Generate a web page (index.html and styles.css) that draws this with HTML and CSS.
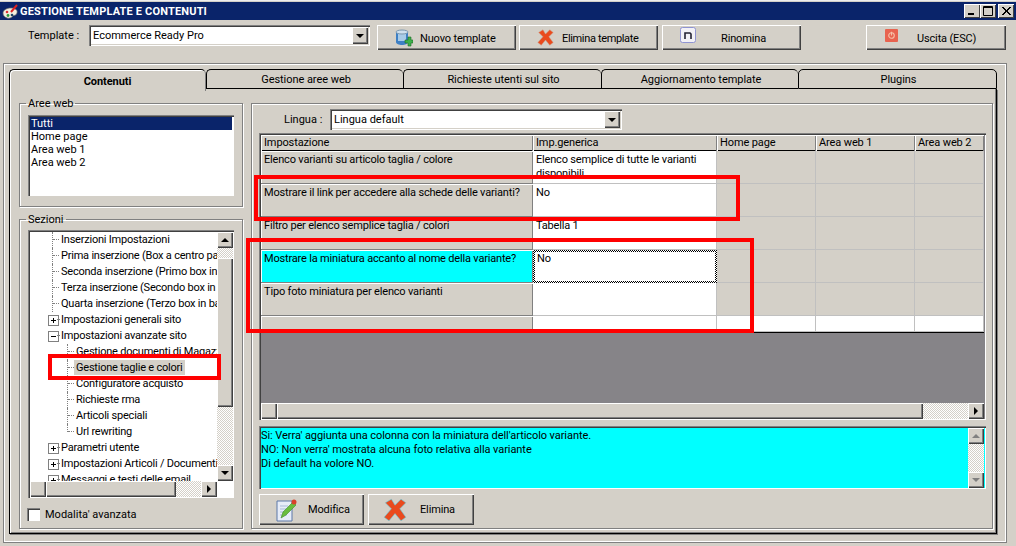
FILE: index.html
```html
<!DOCTYPE html>
<html lang="it">
<head>
<meta charset="utf-8">
<title>Gestione template e contenuti</title>
<link rel="stylesheet" href="styles.css">
</head>
<body>
<div class="window">
  <header class="titlebar">
    <svg class="appicon" width="17" height="15" viewBox="0 0 17 15"><path d="M1 9c0-3 4-5 8-5s7 2 6 5-3 2-4 3-3 3-6 2-4-3-4-5z" fill="#f2eee0" stroke="#666" stroke-width=".7"/><circle cx="5" cy="8" r="1.300" fill="#d33"/><circle cx="6" cy="11.500" r="1.400" fill="#2a9a3a"/><circle cx="10" cy="11" r="1.300" fill="#246"/><path d="M9 8 15 1" stroke="#d22" stroke-width="2"/></svg>
    <span class="titletext">GESTIONE TEMPLATE E CONTENUTI</span>
    <span class="caption-btns">
      <span class="capbtn"><svg width="14" height="12"><rect x="3" y="8" width="6" height="2" fill="#000"/></svg></span>
      <span class="capbtn"><svg width="14" height="12"><path d="M2.500 1.500h9v9h-9z M2 2.500h10" fill="none" stroke="#000"/></svg></span>
      <span class="capbtn close"><svg width="14" height="12"><path d="M3 2l8 8M4 2l8 8M11 2l-8 8M12 2l-8 8" stroke="#000" fill="none"/></svg></span>
    </span>
  </header>

  <div class="toolbar">
    <label class="tb-label">Template :</label>
    <div class="combo combo-template"><span class="combo-text">Ecommerce Ready Pro</span><span class="sb-btn combo-arrow"><i class="arr down"></i></span></div>
    <button class="btn btn-top b-new"><svg width="18" height="18" viewBox="0 0 18 18"><path d="M1 3v10c0 2 3 3 6 3s6-1 6-3V3z" fill="#3d7fc4"/><path d="M3 5h8v7H3z" fill="#a8cbe8"/><ellipse cx="7" cy="3" rx="6" ry="2" fill="#cfe0ef" stroke="#7c98b0"/><path d="M10 11h3V8h3v3h2v3h-2v3h-3v-3h-3z" fill="#3cb04a" stroke="#1d6a27" stroke-width=".6"/></svg><span>Nuovo template</span></button>
    <button class="btn btn-top b-del"><svg width="17" height="17" viewBox="0 0 20 20"><path d="M2 4 7 1l3 5 5-5 4 3-5 5 5 7-4 3-5-6-5 6-4-3 6-7z" fill="#ea4a1d" stroke="#c9a08a" stroke-width=".6"/></svg><span>Elimina template</span></button>
    <button class="btn btn-top b-ren"><svg class="ic-up" width="16" height="16" viewBox="0 0 16 16"><rect x=".5" y=".5" width="15" height="15" rx="2" fill="#f2f1f6" stroke="#8f94d2"/><path d="M5 12V6h5l1 1v5" fill="none" stroke="#223" stroke-width="1.600"/></svg><span>Rinomina</span></button>
    <button class="btn btn-top b-exit"><svg class="ic-up" width="13" height="13" viewBox="0 0 14 14"><rect width="14" height="14" rx="1" fill="#e8634f"/><circle cx="7" cy="7" r="3" fill="none" stroke="#f6c0a8" stroke-width="1.200"/><rect x="6.400" y="3" width="1.200" height="4" fill="#f6c0a8"/></svg><span>Uscita (ESC)</span></button>
  </div>

  <div class="pageframe">
    <nav class="tabs">
      <div class="tab active">Contenuti</div>
      <div class="tab">Gestione aree web</div>
      <div class="tab t3">Richieste utenti sul sito</div>
      <div class="tab">Aggiornamento template</div>
      <div class="tab">Plugins</div>
    </nav>
    <div class="tabbody">
      <aside class="left">
        <fieldset class="group g-aree">
          <legend>Aree web</legend>
          <ul class="listbox">
            <li class="sel">Tutti</li>
            <li>Home page</li>
            <li>Area web 1</li>
            <li>Area web 2</li>
          </ul>
        </fieldset>
        <fieldset class="group g-sez">
          <legend>Sezioni</legend>
          <div class="tree">
            <div class="tree-main">
              <div class="tree-rows">
                <div class="row l1 cont">Inserzioni Impostazioni</div>
                <div class="row l1 cont">Prima inserzione (Box a centro pagina)</div>
                <div class="row l1 cont">Seconda inserzione (Primo box in basso)</div>
                <div class="row l1 cont">Terza inserzione (Secondo box in basso)</div>
                <div class="row l1 cont">Quarta inserzione (Terzo box in basso)</div>
                <div class="row l0 plus">Impostazioni generali sito</div>
                <div class="row l0 minus">Impostazioni avanzate sito</div>
                <div class="row l2 cont">Gestione documenti di Magazzino</div>
                <div class="row l2 cont"><span class="treesel">Gestione taglie e colori</span></div>
                <div class="row l2 cont">Configuratore acquisto</div>
                <div class="row l2 cont">Richieste rma</div>
                <div class="row l2 cont">Articoli speciali</div>
                <div class="row l2 last">Url rewriting</div>
                <div class="row l0 plus">Parametri utente</div>
                <div class="row l0 plus">Impostazioni Articoli / Documenti</div>
                <div class="row l0 plus">Messaggi e testi delle email</div>
              </div>
              <div class="vbar tree-vbar">
                <span class="sb-btn"><i class="arr up"></i></span>
                <span class="track t1"></span>
                <span class="thumb th-tree"></span>
                <span class="track t2"></span>
                <span class="sb-btn"><i class="arr down"></i></span>
              </div>
            </div>
            <div class="hbar tree-hbar">
              <span class="sb-btn"><i class="arr left"></i></span>
              <span class="thumb th-treeh"></span>
              <span class="track grow"></span>
              <span class="sb-btn"><i class="arr right"></i></span>
            </div>
          </div>
          <label class="check"><span class="checkbox"></span>Modalita' avanzata</label>
        </fieldset>
      </aside>

      <section class="panel">
        <div class="lang">
          <label class="lang-label">Lingua :</label>
          <div class="combo combo-lang"><span class="combo-text">Lingua default</span><span class="sb-btn combo-arrow"><i class="arr down"></i></span></div>
        </div>
        <div class="gridbox">
          <div class="grid">
            <div class="hd">Impostazione</div><div class="hd">Imp.generica</div><div class="hd">Home page</div><div class="hd">Area web 1</div><div class="hd">Area web 2</div>
            <div class="c name">Elenco varianti su articolo taglia / colore</div><div class="c val">Elenco semplice di tutte le varianti disponibili</div><div class="c na"></div><div class="c na"></div><div class="c na"></div>
            <div class="c name">Mostrare il link per accedere alla schede delle varianti?</div><div class="c val">No</div><div class="c na"></div><div class="c na"></div><div class="c na"></div>
            <div class="c name">Filtro per elenco semplice taglia / colori</div><div class="c val">Tabella 1</div><div class="c na"></div><div class="c na"></div><div class="c na"></div>
            <div class="c name hot">Mostrare la miniatura accanto al nome della variante?</div><div class="c val focus">No</div><div class="c na"></div><div class="c na"></div><div class="c na"></div>
            <div class="c name">Tipo foto miniatura per elenco varianti</div><div class="c val"></div><div class="c na"></div><div class="c na"></div><div class="c na"></div>
            <div class="c name endrow"></div><div class="c val endrow"></div><div class="c val endrow"></div><div class="c val endrow"></div><div class="c val endrow"></div>
          </div>
          <div class="grid-empty"></div>
          <div class="hbar grid-hbar">
            <span class="sb-btn"><i class="arr left"></i></span>
            <span class="thumb grow"></span>
            <span class="track gtrack"></span>
            <span class="sb-btn"><i class="arr right"></i></span>
          </div>
        </div>
        <div class="memo">
          <div class="memo-text">Si: Verra' aggiunta una colonna con la miniatura dell'articolo variante.<br>NO: Non verra' mostrata alcuna foto relativa alla variante<br>Di default ha volore NO.</div>
          <div class="vbar memo-vbar">
            <span class="sb-btn"><i class="arr up dis"></i></span>
            <span class="track grow"></span>
            <span class="sb-btn"><i class="arr down dis"></i></span>
          </div>
        </div>
        <div class="actions">
          <button class="btn btn-act b-mod"><svg width="22" height="24" viewBox="0 0 22 24"><path d="M1 3h15v20H1z" fill="#e6ecf8" stroke="#5d78a8"/><path d="M4 8h8M4 11h6M4 14h5M4 17h7" stroke="#a9bbd8"/><path d="M5 20l2-6L17 4l3 3L10 17z" fill="#69bd3e" stroke="#3f8a2b" stroke-width=".6"/><circle cx="18" cy="4" r="2.500" fill="#d8402a"/></svg><span>Modifica</span></button>
          <button class="btn btn-act b-eli"><svg width="24" height="24" viewBox="0 0 20 20"><path d="M2 4 7 1l3 5 5-5 4 3-5 5 5 7-4 3-5-6-5 6-4-3 6-7z" fill="#ea4a1d" stroke="#5cc7dd" stroke-width=".5"/></svg><span>Elimina</span></button>
        </div>
      </section>
    </div>
  </div>

  <div class="mark m1"></div>
  <div class="mark m2"></div>
  <div class="mark m3"></div>
</div>
</body>
</html>
```
FILE: styles.css
```css
* { box-sizing: border-box; }
html, body { margin: 0; padding: 0; }
body { width: 1016px; height: 546px; overflow: hidden; background: #d4d0c8; font: 11px/13px Roboto, "Liberation Sans", Arial, sans-serif; color: #000; }
.window { position: relative; width: 1016px; height: 546px; background: #d4d0c8; padding-top: 2px; border-top: 1px solid #eee; }
.titlebar { height: 18px; margin-top: -1px; background: #0a246a; display: flex; align-items: center; padding: 0 2px; color: #fff; }
.appicon { flex: none; margin-right: 1px; }
.titletext { font-weight: bold; font-size: 11px; letter-spacing: .17px; white-space: nowrap; }
.caption-btns { margin-left: auto; display: flex; }
.capbtn { width: 16px; height: 14px; background: #d4d0c8; box-shadow: inset 1px 1px #fff, inset -1px -1px #404040; display: flex; align-items: center; justify-content: center; }
.capbtn.close { margin-left: 2px; }

.toolbar { height: 43px; display: flex; align-items: flex-start; padding: 5px 0 0 28px; }
.tb-label { line-height: 22px; width: 61px; flex: none; }
.combo { display: flex; height: 21px; background: #fff; box-shadow: inset 1px 1px #808080, inset 2px 2px #404040, inset -1px -1px #fff, inset -2px -2px #d4d0c8; padding: 2px; flex: none; }
.combo-template { width: 281px; }
.combo-text { flex: 1; padding: 2px 2px; white-space: nowrap; line-height: 13px; }
.sb-btn { flex: none; width: 16px; height: 16px; background: #d4d0c8; box-shadow: inset 1px 1px #fff, inset -1px -1px #404040, inset -2px -2px #808080; display: flex; align-items: center; justify-content: center; }
.combo-arrow { height: 17px; }
.arr { display: block; width: 0; height: 0; border: 4px solid transparent; }
.arr.down { border-top-color: #000; border-bottom-width: 0; }
.arr.up { border-bottom-color: #000; border-top-width: 0; }
.arr.left { border-right-color: #000; border-left-width: 0; }
.arr.right { border-left-color: #000; border-right-width: 0; }
.arr.up.dis { border-bottom-color: #808080; }
.arr.down.dis { border-top-color: #808080; }

.btn { background: #d4d0c8; border: 0; padding: 0; font: inherit; color: #000; display: flex; align-items: center; box-shadow: inset 1px 1px #fff, inset -1px -1px #404040, inset -2px -2px #808080; flex: none; white-space: nowrap; letter-spacing: -.15px; }
.btn-top { height: 25px; width: 139px; }
.btn-top span { padding-top: 1px; }
.b-new { margin-left: 7px; padding-left: 18px; }
.b-new span { margin-left: 7px; }
.b-del { margin-left: 3px; padding-left: 18px; }
.b-del span { margin-left: 8px; letter-spacing: -.35px; }
.b-ren { margin-left: 4px; width: 139px; padding-left: 18px; }
.b-ren span { margin-left: 25px; }
.b-exit { margin-left: 65px; width: 140px; padding-left: 19px; }
.b-exit span { margin-left: 19px; }
.ic-up { margin-top: -5px; }

.pageframe { height: 480px; margin: 0 9px 0 3px; border: 1px solid #808080; padding: 5px 0 0 5px; box-shadow: inset 1px 1px #fff, inset -1px -1px #fff; }
.tabs { display: flex; height: 20px; width: 988px; position: relative; z-index: 1; }
.tab { flex: none; width: 197px; text-align: center; line-height: 20px; border: 1px solid #000; border-right: 0; border-radius: 5px 5px 0 0; background: #d4d0c8; padding-left: 2px; letter-spacing: -.05px; }
.tab.t3 { width: 198px; }
.tab:last-child { width: 199px; border-right: 1px solid #000; }
.tab.active { font-weight: bold; height: 22px; line-height: 23px; border-bottom: 0; border-right: 1px solid #808080; box-shadow: inset 1px 1px #fff; padding-left: 0; }
.tabbody { width: 988px; height: 445px; border: 1px solid #000; border-top: 0; box-shadow: inset 1px 0 #fff, inset -1px -1px #808080, 1px 1px #808080; display: flex; padding: 8px 0 0 9px; }

.left { width: 224px; flex: none; display: flex; flex-direction: column; }
.group { margin: 0; padding: 0; width: 224px; min-width: 0; border: 1px solid #808080; box-shadow: 1px 1px #fff, inset 1px 1px #fff; }
.group legend { padding: 0 2px; margin-left: -2px; line-height: 13px; }
.g-aree { height: 110px; padding: 5px 8px 0 8px; }
.listbox { list-style: none; margin: 0; padding: 2px; height: 81px; background: #fff; box-shadow: inset 1px 1px #808080, inset 2px 2px #404040, inset -1px -1px #fff; }
.listbox li { line-height: 13px; padding-left: 1px; }
.listbox li.sel { background: #0a246a; color: #fff; }
.g-sez { margin-top: 6px; height: 316px; padding: 4px 8px 0 8px; }
.tree { width: 206px; height: 268px; background: #fff; padding: 2px 1px 1px 2px; box-shadow: inset 1px 1px #808080, inset 2px 2px #404040, inset -1px -1px #fff; display: flex; flex-direction: column; }
.tree-main { flex: 1; display: flex; min-height: 0; }
.tree-rows { flex: 1; overflow: hidden; min-width: 0; letter-spacing: -.22px; }
.row { position: relative; height: 16px; line-height: 15px; white-space: nowrap; }
.row::before, .row::after { content: ""; position: absolute; }
.l1 { padding-left: 31px; }
.l0 { padding-left: 31px; }
.l2 { padding-left: 46px; }
.l1::before { left: 22px; top: 0; height: 16px; border-left: 1px dotted #808080; }
.l1::after { left: 23px; top: 7px; width: 6px; border-top: 1px dotted #808080; }
.l2::before { left: 37px; top: 0; height: 16px; border-left: 1px dotted #808080; }
.l2::after { left: 38px; top: 7px; width: 6px; border-top: 1px dotted #808080; }
.l2.last::before { height: 8px; }
.l0::before { left: 18px; top: 3px; width: 9px; height: 9px; border: 1px solid #808080; background: linear-gradient(#000,#000) center/5px 1px no-repeat, #fff; }
.l0.plus::before { background: linear-gradient(#000,#000) center/5px 1px no-repeat, linear-gradient(#000,#000) center/1px 5px no-repeat, #fff; }
.l0::after { left: 27px; top: 7px; width: 3px; border-top: 1px dotted #808080; }
.treesel { display: inline-block; background: #d4d0c8; padding: 0 2px; margin-left: -2px; height: 15px; }
.vbar { display: flex; flex-direction: column; flex: none; width: 16px; background: #d4d0c8; }
.hbar { display: flex; flex: none; height: 16px; background: #d4d0c8; }
.track { display: block; background: repeating-conic-gradient(#fff 0 25%, #d4d0c8 0 50%) 0 0/2px 2px; }
.thumb { display: block; background: #d4d0c8; box-shadow: inset 1px 1px #fff, inset -1px -1px #404040, inset -2px -2px #808080; }
.grow { flex: 1; }
.t1 { height: 10px; }
.th-tree { height: 149px; }
.t2 { flex: 1; }
.th-treeh { width: 130px; }
.tree-hbar { margin-right: 16px; }

.check { margin: 10px 0 0 -1px; display: flex; align-items: center; height: 13px; }
.checkbox { width: 13px; height: 13px; background: #fff; box-shadow: inset 1px 1px #808080, inset 2px 2px #404040, inset -1px -1px #fff; margin-right: 5px; }

.panel { width: 742px; height: 426px; margin: 6px 0 0 8px; flex: none; border: 1px solid #808080; box-shadow: inset 1px 1px #fff, 1px 1px #fff; padding: 5px 0 0 7px; display: flex; flex-direction: column; }
.lang { display: flex; height: 24px; flex: none; }
.lang-label { margin-left: 25px; width: 46px; line-height: 21px; flex: none; }
.combo-lang { width: 292px; }
.gridbox { width: 727px; height: 287px; flex: none; padding: 2px 2px 1px 2px; background: #868488; box-shadow: inset 1px 1px #808080, inset 2px 2px #404040, inset -1px -1px #fff; display: flex; flex-direction: column; }
.grid { display: grid; grid-template-columns: 272px 184px 99px 99px 69px; grid-template-rows: 16px repeat(5, 33px) 16px; background: #fff; flex: none; overflow: hidden; border-bottom: 1px solid #000; }
.hd { background: #d4d0c8; padding: 1px 0 0 3px; box-shadow: inset 1px 1px #fff, inset -1px 0 #808080, inset 0 -1px #000; line-height: 14px; letter-spacing: -.12px; }
.c { padding: 1px 3px; line-height: 14px; overflow: hidden; letter-spacing: -.18px; }
.name { background: #d4d0c8; box-shadow: inset 0 -1px #808080, inset 1px 1px #fff, inset -1px 0 #808080; padding-top: 2px; }
.name.hot { background: #00ffff; }
.val { background: #fff; box-shadow: inset 0 -1px #c0c0c0, inset -1px 0 #c0c0c0; padding-top: 2px; }
.na { background: #d4d0c8; box-shadow: inset 0 -1px #c0c0c0, inset -1px 0 #c0c0c0; }
.focus { border: 2px solid transparent; padding: 0 2px; background: linear-gradient(#fff,#fff) padding-box, repeating-conic-gradient(#000 0 25%, #fff 0 50%) border-box 0 0/2px 2px; box-shadow: none; }
.endrow { padding: 0; }
.grid-empty { flex: 1; }
.gtrack { width: 45px; }

.memo { width: 727px; height: 63px; margin-top: 6px; flex: none; display: flex; padding: 2px 2px 1px 2px; background: #00ffff; box-shadow: inset 1px 1px #808080, inset 2px 2px #404040, inset -1px -1px #fff; }
.memo-text { flex: 1; line-height: 14px; padding: 1px 0 0 0; white-space: nowrap; letter-spacing: -.07px; }
.memo-vbar { width: 16px; }
.actions { display: flex; gap: 4px; margin-top: 5px; flex: none; }
.btn-act { height: 31px; width: 105px; padding-left: 17px; }
.b-mod span { margin-left: 10px; }
.b-eli { width: 106px; padding-left: 15px; }
.b-eli span { margin-left: 13px; }

.mark { position: absolute; border: 4px solid #f00; pointer-events: none; }
.m1 { left: 254px; top: 174px; width: 486px; height: 46px; }
.m2 { left: 246px; top: 237px; width: 508px; height: 95px; }
.m3 { left: 48px; top: 353px; width: 173px; height: 26px; }
```
